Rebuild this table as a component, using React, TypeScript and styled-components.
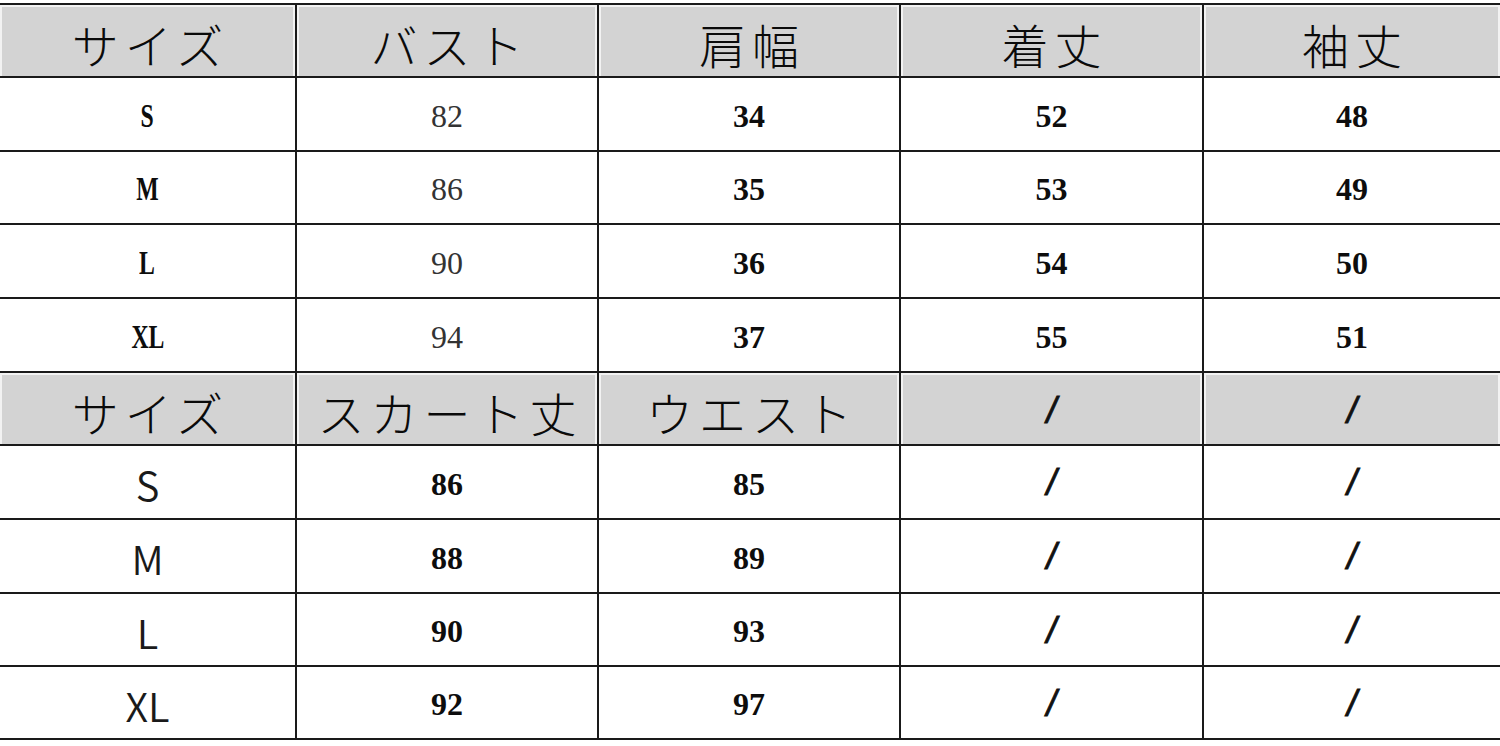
import styled, { createGlobalStyle } from "styled-components";

const GlobalStyle = createGlobalStyle`
  html, body {
    margin: 0;
    padding: 0;
    background: #ffffff;
  }
`;

type Kind = "head" | "bold" | "plain" | "sans" | "label" | "slash";

interface CellData {
  text: string;
  kind: Kind;
}

interface RowData {
  head?: boolean;
  height: number;
  cells: CellData[];
}

const h = (text: string): CellData => ({ text, kind: "head" });
const b = (text: string): CellData => ({ text, kind: "bold" });
const p = (text: string): CellData => ({ text, kind: "plain" });
const s = (text: string): CellData => ({ text, kind: "sans" });
const l = (text: string): CellData => ({ text, kind: "label" });
const sl = (): CellData => ({ text: "/", kind: "slash" });

const rows: RowData[] = [
  { head: true, height: 73, cells: [h("サイズ"), h("バスト"), h("肩幅"), h("着丈"), h("袖丈")] },
  { height: 74, cells: [l("S"), p("82"), b("34"), b("52"), b("48")] },
  { height: 73, cells: [l("M"), p("86"), b("35"), b("53"), b("49")] },
  { height: 74, cells: [l("L"), p("90"), b("36"), b("54"), b("50")] },
  { height: 74, cells: [l("XL"), p("94"), b("37"), b("55"), b("51")] },
  { head: true, height: 73, cells: [h("サイズ"), h("スカート丈"), h("ウエスト"), sl(), sl()] },
  { height: 74, cells: [s("S"), b("86"), b("85"), sl(), sl()] },
  { height: 74, cells: [s("M"), b("88"), b("89"), sl(), sl()] },
  { height: 73, cells: [s("L"), b("90"), b("93"), sl(), sl()] },
  { height: 73, cells: [s("XL"), b("92"), b("97"), sl(), sl()] },
];

const Page = styled.div`
  width: 1500px;
  padding-top: 3px;
`;

const Table = styled.div`
  display: flex;
  flex-direction: column;
  border-bottom: 2px solid #1a1a1a;
`;

const Row = styled.div<{ $head?: boolean; $h: number }>`
  display: grid;
  grid-template-columns: 295px 302px 302px 303px 298px;
  height: ${(p) => p.$h}px;
  box-sizing: border-box;
  border-top: 2px solid #1a1a1a;
  background: ${(p) => (p.$head ? "#d3d3d3" : "#ffffff")};
`;

const Cell = styled.div<{ $head?: boolean }>`
  display: flex;
  align-items: center;
  justify-content: center;
  box-sizing: border-box;
  border-left: 2px solid #1a1a1a;
  box-shadow: ${(p) => (p.$head ? "inset 0 0 0 2px #f2f2f2" : "none")};
  color: #111111;
  &:first-child {
    border-left: none;
  }
`;

const HeadText = styled.span`
  font-family: "Noto Sans CJK JP", "Noto Sans", sans-serif;
  font-weight: 300;
  font-size: 47px;
  letter-spacing: 6px;
  margin-right: -6px;
  margin-top: 4px;
  color: #0a0a0a;
`;

const NumText = styled.span<{ $bold?: boolean }>`
  font-family: "Liberation Serif", "Times New Roman", serif;
  font-weight: ${(p) => (p.$bold ? 700 : 400)};
  font-size: 32px;
  margin-top: 4px;
  color: ${(p) => (p.$bold ? "#0d0d0d" : "#333333")};
`;

const LabelText = styled.span`
  display: inline-block;
  font-family: "Liberation Serif", "Times New Roman", serif;
  font-weight: 700;
  font-size: 33px;
  transform: scaleX(0.72);
  margin-top: 4px;
  color: #0d0d0d;
`;

const SansText = styled.span`
  font-family: "Noto Sans CJK JP", "Noto Sans", sans-serif;
  font-weight: 350;
  font-size: 40px;
  margin-top: 4px;
  color: #1a1a1a;
`;

const SlashText = styled.span`
  font-family: "Liberation Sans", Arial, sans-serif;
  font-weight: 400;
  font-style: italic;
  font-size: 36px;
  -webkit-text-stroke: 0.8px #111111;
  margin-top: 2px;
  color: #111111;
`;

const renderContent = (c: CellData) => {
  switch (c.kind) {
    case "head":
      return <HeadText>{c.text}</HeadText>;
    case "bold":
      return <NumText $bold>{c.text}</NumText>;
    case "plain":
      return <NumText>{c.text}</NumText>;
    case "label":
      return <LabelText>{c.text}</LabelText>;
    case "sans":
      return <SansText>{c.text}</SansText>;
    case "slash":
      return <SlashText>{c.text}</SlashText>;
  }
};

export default function App() {
  return (
    <>
      <GlobalStyle />
      <Page>
        <Table>
          {rows.map((row, i) => (
            <Row key={i} $head={row.head} $h={row.height}>
              {row.cells.map((c, j) => (
                <Cell key={j} $head={row.head}>
                  {renderContent(c)}
                </Cell>
              ))}
            </Row>
          ))}
        </Table>
      </Page>
    </>
  );
}
